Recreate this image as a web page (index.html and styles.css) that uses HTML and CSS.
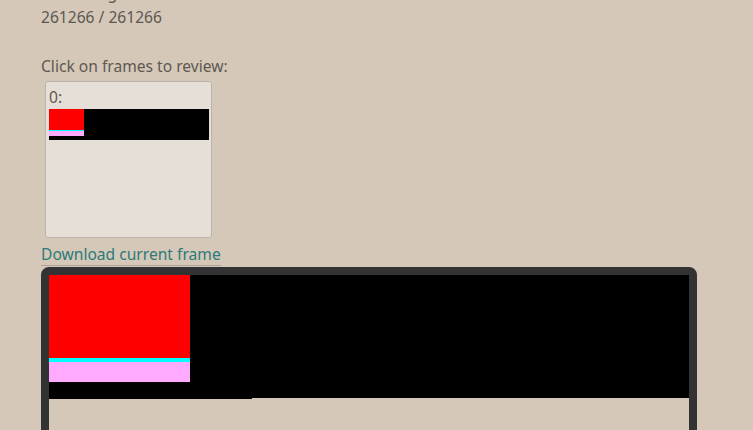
FILE: index.html
```html
<!DOCTYPE html>
<html>
<head>
<meta charset="utf-8">
<link rel="stylesheet" href="styles.css">
</head>
<body>
<main class="page">
  <div class="status">
    <div class="line">Rendering</div>
    <div class="line">261266 / 261266</div>
  </div>
  <div class="prompt">Click on frames to review:</div>
  <div class="frames">
    <button class="frame-card" type="button">
      <span class="frame-label">0:</span>
      <span class="thumb">
        <span class="thumb-red"></span>
        <span class="thumb-cyan"></span>
        <span class="thumb-pink"></span>
      </span>
    </button>
  </div>
  <div class="download-row"><a class="download" href="#">Download current frame</a></div>
  <div class="viewer">
    <div class="canvas">
      <div class="c-red"></div>
      <div class="c-cyan"></div>
      <div class="c-pink"></div>
    </div>
    <div class="canvas-tail"></div>
  </div>
</main>
</body>
</html>
```
FILE: styles.css
```css
html, body {
  margin: 0;
  padding: 0;
  background: #d5c8b8;
  overflow: hidden;
}
body {
  font-family: "Noto Sans", "Open Sans", sans-serif;
  font-size: 15.6px;
  line-height: 24px;
  color: #5d5852;
}
.page {
  padding: 0 41px;
}
.status {
  margin-top: -19px;
}
.prompt {
  margin-top: 25px;
}
.frames {
  display: flex;
  margin-top: 3px;
  padding-left: 4px;
}
.frame-card {
  display: flex;
  flex-direction: column;
  align-items: flex-start;
  box-sizing: border-box;
  width: 167px;
  height: 157px;
  margin: 0;
  padding: 3px 0 0 3px;
  border: 1px solid #bcb4aa;
  border-radius: 3px;
  background: #e6dfd8;
  font: inherit;
  color: inherit;
  text-align: left;
}
.frame-label {
  display: block;
  line-height: 24px;
}
.thumb {
  display: block;
  width: 160px;
  height: 31px;
  background: #000;
}
.thumb-red {
  display: block;
  width: 35px;
  height: 21px;
  background: #ff0000;
}
.thumb-cyan {
  display: block;
  width: 35px;
  height: 1px;
  background: #00ffff;
}
.thumb-pink {
  display: block;
  width: 35px;
  height: 5px;
  background: #ffaaff;
}
.download-row {
  margin-top: 5px;
  line-height: 23px;
}
.download {
  color: #2c7a78;
  text-decoration: none;
  border-bottom: 1px solid #aca59c;
}
.viewer {
  box-sizing: border-box;
  width: 656px;
  height: 200px;
  margin-top: 1px;
  border: 8px solid #333333;
  border-radius: 8px;
  background: #d5c8b8;
}
.canvas {
  width: 640px;
  height: 123px;
  background: #000;
}
.c-red {
  width: 141px;
  height: 83px;
  background: #ff0000;
}
.c-cyan {
  width: 141px;
  height: 4px;
  background: #00ffff;
}
.c-pink {
  width: 141px;
  height: 20px;
  background: #ffaaff;
}
.canvas-tail {
  width: 203px;
  height: 1px;
  background: #000;
}
```
